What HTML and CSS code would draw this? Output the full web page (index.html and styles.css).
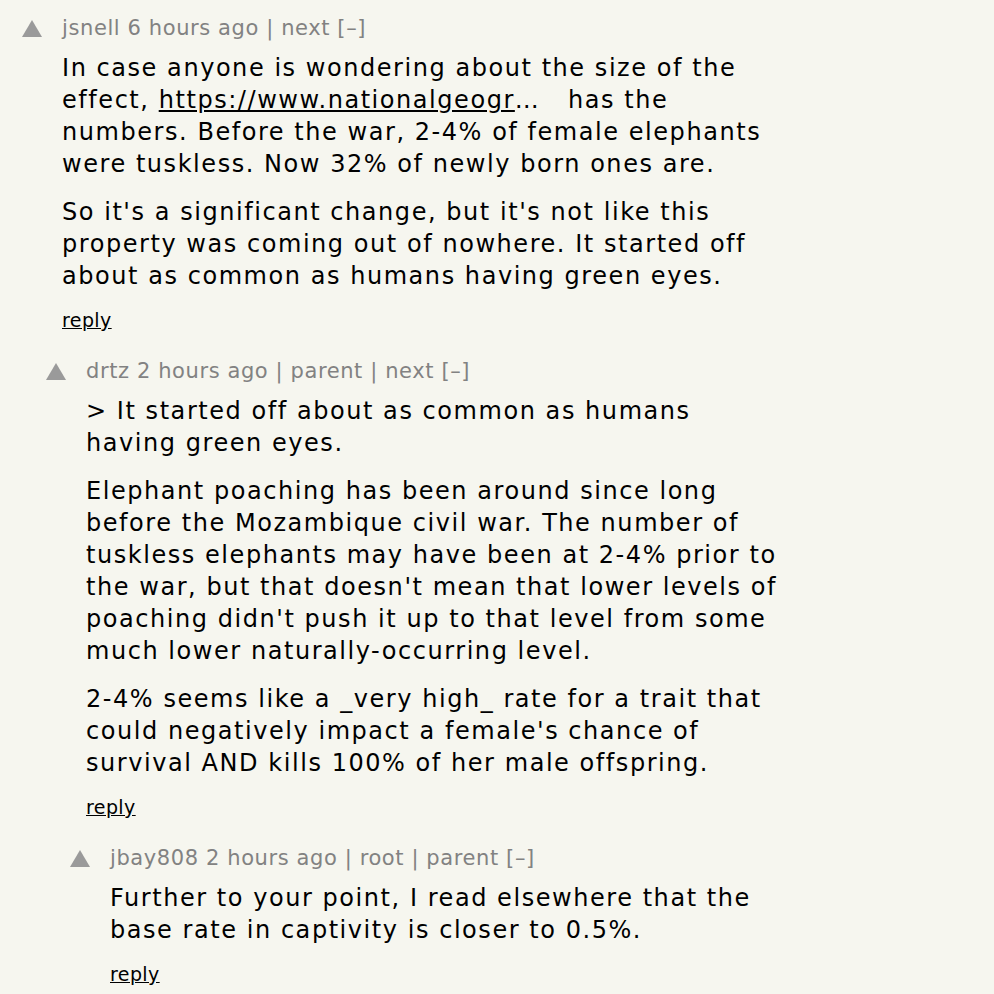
FILE: index.html
```html
<!DOCTYPE html>
<html>
<head>
<meta charset="utf-8">
<link rel="stylesheet" href="styles.css">
</head>
<body>
<div class="thread">
  <div class="comment">
    <div class="head">
      <span class="vote"></span>
      <span class="meta">jsnell 6 hours ago | next [–]</span>
    </div>
    <div class="body">
      <p>In case anyone is wondering about the size of the effect, <a class="link" href="#">https://www.nationalgeogr</a>…&nbsp;&nbsp; has the numbers. Before the war, 2-4% of female elephants were tuskless. Now 32% of newly born ones are.</p>
      <p>So it's a significant change, but it's not like this property was coming out of nowhere. It started off about as common as humans having green eyes.</p>
      <a class="reply" href="#">reply</a>
    </div>
  </div>
  <div class="comment level1">
    <div class="head">
      <span class="vote"></span>
      <span class="meta">drtz 2 hours ago | parent | next [–]</span>
    </div>
    <div class="body">
      <p>&gt; It started off about as common as humans having green eyes.</p>
      <p>Elephant poaching has been around since long before the Mozambique civil war. The number of tuskless elephants may have been at 2-4% prior to the war, but that doesn't mean that lower levels of poaching didn't push it up to that level from some much lower naturally-occurring level.</p>
      <p>2-4% seems like a _very high_ rate for a trait that could negatively impact a female's chance of survival AND kills 100% of her male offspring.</p>
      <a class="reply" href="#">reply</a>
    </div>
  </div>
  <div class="comment level2">
    <div class="head">
      <span class="vote"></span>
      <span class="meta">jbay808 2 hours ago | root | parent [–]</span>
    </div>
    <div class="body">
      <p>Further to your point, I read elsewhere that the base rate in captivity is closer to 0.5%.</p>
      <a class="reply" href="#">reply</a>
    </div>
  </div>
</div>
</body>
</html>
```

FILE: styles.css
```css
html, body {
  margin: 0;
  padding: 0;
  background: #f6f6ef;
}
body {
  font-family: "DejaVu Sans", Verdana, sans-serif;
  color: #000;
}
.thread {
  width: 786px;
  padding: 14px 0 0 22px;
  box-sizing: border-box;
}
.comment {
  margin-bottom: 26px;
}
.level1 { padding-left: 24px; }
.level2 { padding-left: 48px; }
.head {
  display: flex;
  align-items: center;
  height: 28px;
}
.vote {
  width: 0;
  height: 0;
  border-left: 10px solid transparent;
  border-right: 10px solid transparent;
  border-bottom: 17px solid #9a9a9a;
  margin-right: 20px;
}
.meta {
  font-size: 21px;
  letter-spacing: 0.6px;
  color: #828282;
}
.body {
  padding-left: 40px;
  padding-top: 10px;
}
.body p {
  font-size: 24px;
  line-height: 32px;
  letter-spacing: 1.55px;
  margin: 0 0 16px 0;
}
.link {
  color: #000;
  text-decoration: underline;
}
.reply {
  display: inline-block;
  font-size: 19px;
  letter-spacing: 0.4px;
  color: #000;
  text-decoration: underline;
  margin-top: 1px;
}
```
